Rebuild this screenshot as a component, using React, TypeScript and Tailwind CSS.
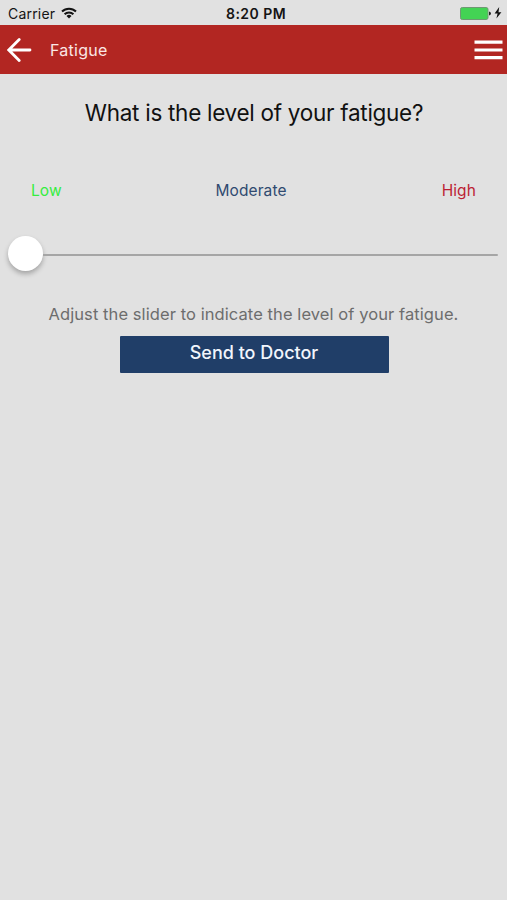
function StatusBar() {
  return (
    <header className="grid h-[25px] grid-cols-[1fr_auto_1fr] items-center pt-[2px] text-[#141414]">
      <div className="flex items-center gap-[6px] pl-[8px]">
        <span className="text-[14px] tracking-[0.2px]">Carrier</span>
        <svg className="-mt-[2px]" width="16" height="12" viewBox="0 0 16 12" fill="none" stroke="currentColor" strokeWidth="2">
          <path d="M1 4.5A10 10 0 0 1 15 4.5" />
          <path d="M3.6 7.3A6.2 6.2 0 0 1 12.4 7.3" />
          <path d="M8 11.5 5.5 9A3.5 3.5 0 0 1 10.5 9Z" fill="currentColor" stroke="none" />
        </svg>
      </div>
      <span className="pl-[5px] text-[14px] font-semibold tracking-[0.45px]">8:20 PM</span>
      <div className="flex items-center justify-end gap-[3px] pr-[5px]">
        <svg width="31" height="13" viewBox="0 0 31 13">
          <rect x="0.5" y="0.5" width="27.5" height="12" rx="1.8" fill="#43d354" stroke="#6f9873" />
          <path d="M29 4.5q2 .3 2 2t-2 2z" fill="#222" />
        </svg>
        <svg className="-mt-px" width="8" height="12" viewBox="0 0 8 12">
          <path d="M5.2 0 .6 6.6h3L2.4 11.4l5-6.2H4.5z" fill="#111" />
        </svg>
      </div>
    </header>
  );
}

function NavBar() {
  return (
    <nav className="flex h-[49px] items-center bg-[#b22622] text-white">
      <button aria-label="Back" className="ml-[7px]">
        <svg width="25" height="26" viewBox="0 0 25 26" fill="none" stroke="currentColor" strokeWidth="2.8" strokeLinecap="round">
          <path d="M23 13H2M12.2 2.5 1.8 13 12.2 23.5" />
        </svg>
      </button>
      <h1 className="ml-[18px] text-[16px] tracking-[0.25px] text-[#fae7e5]">Fatigue</h1>
      <button aria-label="Menu" className="mr-[4px] ml-auto">
        <svg width="29" height="20" viewBox="0 0 29 20" fill="currentColor">
          <path d="M.5.6h28v3.2H.5zM.5 8.4h28v3.2H.5zM.5 16.1h28v3.2H.5z" />
        </svg>
      </button>
    </nav>
  );
}

export default function App() {
  return (
    <div className="flex h-screen w-full flex-col bg-[#e1e1e1] font-['Inter',sans-serif]">
      <StatusBar />
      <NavBar />
      <main className="flex flex-col">
        <h2 className="mt-[23px] pl-px text-center text-[22.5px] leading-[32px] tracking-[-0.28px] whitespace-nowrap text-[#111]">
          What is the level of your fatigue?
        </h2>
        <div className="mt-[50px] grid grid-cols-3 pr-[31px] pl-[31px] text-[15.5px] leading-[24px] tracking-[0.1px]">
          <span className="text-[#35ed40]">Low</span>
          <span className="pr-[5px] text-center text-[#304a70]">Moderate</span>
          <span className="text-right text-[#bc1f34]">High</span>
        </div>
        <div className="mt-[33px] flex h-[35px] items-center pr-[9px] pl-[8px]">
          <div className="size-[35px] shrink-0 rounded-full bg-white shadow-[0_3px_5px_rgba(0,0,0,0.27)]" />
          <div className="mt-[3px] h-[2px] flex-1 rounded-r-full bg-[#a5a5a5]" />
        </div>
        <p className="mt-[31px] text-center text-[16.5px] leading-[24px] tracking-[0.08px] whitespace-nowrap text-[#6d6d6d]">
          Adjust the slider to indicate the level of your fatigue.
        </p>
        <button className="mt-[10px] ml-px h-[37px] w-[269px] self-center rounded-[1px] bg-[#203e68] pb-[4px] text-[18px] leading-[24px] font-medium text-[#f1f5fc]">
          Send to Doctor
        </button>
      </main>
    </div>
  );
}
